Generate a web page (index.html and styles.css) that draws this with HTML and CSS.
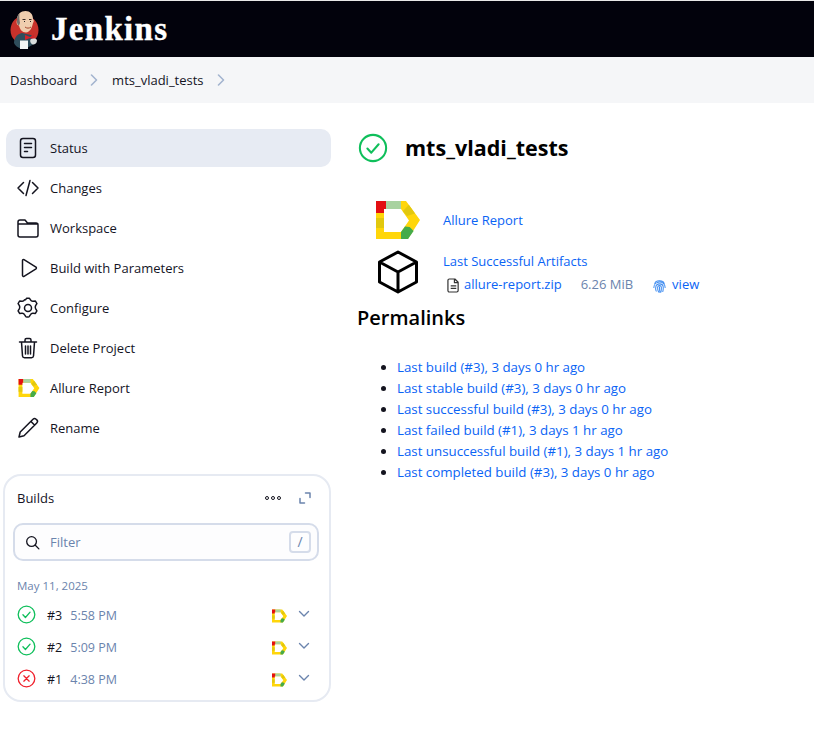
FILE: index.html
```html
<!DOCTYPE html>
<html lang="en">
<head>
<meta charset="utf-8">
<title>mts_vladi_tests - Jenkins</title>
<link rel="stylesheet" href="styles.css">
</head>
<body>
<svg class="defs" width="0" height="0" aria-hidden="true">
  <defs>
    <symbol id="allure" viewBox="0 0 44 38">
      <path fill-rule="evenodd" d="M0 0H30L44 19 32 38H0ZM8 8V31H25L33 19.500 25 8Z" fill="#ffd60a"/>
      <path d="M0 0H10V8H8V12H0Z" fill="#e30f12"/>
      <path d="M10 0H25V8H10Z" fill="#a8d2a0"/>
      <path d="M32.800 3.800 39 12.400 31 15 26.800 10.300Z" fill="#e2c80e"/>
      <path d="M0 17H8V27H0Z" fill="#e2c80e"/>
      <path d="M33.600 26 37.600 30 32 38H25V31L29 25.500Z" fill="#45ab4a"/>
    </symbol>
    <symbol id="ok" viewBox="0 0 32 32">
      <circle cx="16" cy="16" r="14" fill="none" stroke="#0fbf5b" stroke-width="2.200"/>
      <path d="M10 16.500l4.200 4.500L22 12" fill="none" stroke="#0fbf5b" stroke-width="2.200" stroke-linecap="round" stroke-linejoin="round"/>
    </symbol>
    <symbol id="chev" viewBox="0 0 12 8">
      <path d="M1.500 1.500 6 6l4.500-4.500" fill="none" stroke="#6b84ad" stroke-width="1.400" stroke-linecap="round" stroke-linejoin="round"/>
    </symbol>
  </defs>
</svg>

<header class="topbar">
  <svg class="logo" viewBox="0 0 30 40" width="30" height="40" aria-hidden="true">
    <ellipse cx="14.500" cy="20" rx="14" ry="14.500" fill="#c8322b"/>
    <path d="M4 33c0-5 3-9 8-10l9 2c3 2 4 5 3 9l-9 5c-5 0-9-2-11-6z" fill="#2f4d5c"/>
    <path d="M7 10c0-6 4-9 8.500-9S23 4 23 9c1 1 1 3 0 4-1 5-3 9-7 9.500-4 0-6-3-7-7-2 0-3-3-2-5.500z" fill="#efcdae"/>
    <path d="M7 10c0-3 1-5 2.500-6.500C9 7 9.500 10 10 13l-1 2.500c-1 0-2.500-3-2-5.500z" fill="#77706c"/>
    <path d="M12.500 9.500h3M19 9.500h2.500" stroke="#3a2b25" stroke-width="1.100"/>
    <path d="M14 11.500h1M20 11.500h1" stroke="#222" stroke-width="1.200"/>
    <path d="M15 17c2 1.500 4 1.500 6 0" stroke="#a5452c" fill="none"/>
    <path d="M15 25l5 2 4-2.500v5l-4-1.500-5 2z" fill="#d3232b"/>
    <path d="M10 30.500h8V39h-8z" fill="#f4f4f4"/>
    <path d="M21 29c2-1 6-1 6 1.500s-2 4-4 4-4-4-2-5.500z" fill="#d9dcdc"/>
  </svg>
  <span class="brand">Jenkins</span>
</header>

<nav class="crumbs">
  <a class="crumb">Dashboard</a>
  <svg class="crumb-sep" viewBox="0 0 8 12" width="8" height="12" aria-hidden="true"><path d="M1.500 1 6.500 6l-5 5" fill="none" stroke="#a3b4cf" stroke-width="1.600" stroke-linecap="round" stroke-linejoin="round"/></svg>
  <a class="crumb">mts_vladi_tests</a>
  <svg class="crumb-sep" viewBox="0 0 8 12" width="8" height="12" aria-hidden="true"><path d="M1.500 1 6.500 6l-5 5" fill="none" stroke="#a3b4cf" stroke-width="1.600" stroke-linecap="round" stroke-linejoin="round"/></svg>
</nav>

<div class="page">
  <aside class="side">
    <ul class="tasks">
      <li class="task active">
        <svg class="task-ico" viewBox="0 0 24 24"><rect x="4.500" y="2.500" width="15" height="19" rx="2.500"/><path d="M8.500 7.500h7M8.500 11.500h7M8.500 15.500h3"/></svg>
        <span>Status</span>
      </li>
      <li class="task">
        <svg class="task-ico" viewBox="0 0 24 24"><path d="M7.500 6.500 2 12l5.500 5.500M16.500 6.500 22 12l-5.500 5.500M14 4.500l-4 15"/></svg>
        <span>Changes</span>
      </li>
      <li class="task">
        <svg class="task-ico" viewBox="0 0 24 24"><path d="M2 8V6a2 2 0 0 1 2-2h5l2.500 3H20a2 2 0 0 1 2 2v10a2 2 0 0 1-2 2H4a2 2 0 0 1-2-2zM2 8h20"/></svg>
        <span>Workspace</span>
      </li>
      <li class="task">
        <svg class="task-ico" viewBox="0 0 24 24"><path d="M6.500 4.500v15a1 1 0 0 0 1.500.8l12-7.500a1 1 0 0 0 0-1.600L8 3.700a1 1 0 0 0-1.500.8z"/></svg>
        <span>Build with Parameters</span>
      </li>
      <li class="task">
        <svg class="task-ico" viewBox="0 0 24 24"><path d="M9.500 3.800 10.500 2.300h3l1 1.500c.5 1 1.500 1.500 2.600 1.400l2.300-.2 1.500 2.600-1.300 2.100c-.5 1-.5 2 0 3l1.300 2.100-1.500 2.600-2.300-.2c-1.100-.1-2.100.4-2.600 1.400l-1 1.500-.1.200c-.3.500-.7.700-1.200.7h-1.400c-.5 0-.9-.2-1.200-.7l-.1-.2-1-1.500c-.5-1-1.500-1.500-2.600-1.400l-2.300.2-1.500-2.600 1.300-2.100c.5-1 .5-2 0-3L2.100 7.600l1.500-2.600 2.300.2c1.100.1 2.100-.4 2.600-1.400z"/><circle cx="12" cy="12" r="3.500"/></svg>
        <span>Configure</span>
      </li>
      <li class="task">
        <svg class="task-ico" viewBox="0 0 24 24"><path d="M3.500 6h17M9 5.500V4a1.500 1.500 0 0 1 1.500-1.500h3A1.500 1.500 0 0 1 15 4v1.500M5.500 6l1 14a2 2 0 0 0 2 1.800h7a2 2 0 0 0 2-1.800l1-14M9.500 10v8M12 10v8M14.500 10v8"/></svg>
        <span>Delete Project</span>
      </li>
      <li class="task">
        <svg class="task-img" width="20" height="18"><use href="#allure"/></svg>
        <span>Allure Report</span>
      </li>
      <li class="task">
        <svg class="task-ico" viewBox="0 0 24 24"><path d="M3 21l1.200-5L17 3.200a2.200 2.200 0 0 1 3.100 0l.7.700a2.200 2.200 0 0 1 0 3.100L8 19.800zM15 5.500l3.500 3.500"/></svg>
        <span>Rename</span>
      </li>
    </ul>

    <section class="builds">
      <div class="builds-head">
        <span class="builds-title">Builds</span>
        <div class="builds-tools">
          <svg class="dots" viewBox="0 0 16 4" width="16" height="4" aria-hidden="true"><circle cx="2" cy="2" r="1.500"/><circle cx="8" cy="2" r="1.500"/><circle cx="14" cy="2" r="1.500"/></svg>
          <svg class="expand" viewBox="0 0 12 12" width="12" height="12" aria-hidden="true"><path d="M6.500 1H11v4.500M5.500 11H1V6.500"/></svg>
        </div>
      </div>
      <div class="filter">
        <svg class="filter-ico" viewBox="0 0 16 16" width="15" height="15" aria-hidden="true"><circle cx="7" cy="7" r="5.200"/><path d="M11 11l3.800 3.800"/></svg>
        <span class="filter-text">Filter</span>
        <kbd class="filter-key">/</kbd>
      </div>
      <div class="build-date">May 11, 2025</div>
      <div class="build">
        <svg class="build-status" width="19" height="19"><use href="#ok"/></svg>
        <span class="build-num">#3</span><span class="build-time">5:58 PM</span>
        <svg class="build-allure" width="15" height="14"><use href="#allure"/></svg>
        <svg class="build-chev" width="12" height="8"><use href="#chev"/></svg>
      </div>
      <div class="build">
        <svg class="build-status" width="19" height="19"><use href="#ok"/></svg>
        <span class="build-num">#2</span><span class="build-time">5:09 PM</span>
        <svg class="build-allure" width="15" height="14"><use href="#allure"/></svg>
        <svg class="build-chev" width="12" height="8"><use href="#chev"/></svg>
      </div>
      <div class="build">
        <svg class="build-status" viewBox="0 0 32 32" width="19" height="19"><circle cx="16" cy="16" r="14" fill="none" stroke="#f0202c" stroke-width="2.200"/><path d="M11.500 11.500l9 9M20.500 11.500l-9 9" fill="none" stroke="#f0202c" stroke-width="2.200" stroke-linecap="round"/></svg>
        <span class="build-num">#1</span><span class="build-time">4:38 PM</span>
        <svg class="build-allure" width="15" height="14"><use href="#allure"/></svg>
        <svg class="build-chev" width="12" height="8"><use href="#chev"/></svg>
      </div>
    </section>
  </aside>

  <main class="content">
    <div class="title-row">
      <svg width="30" height="30"><use href="#ok"/></svg>
      <h1 class="title">mts_vladi_tests</h1>
    </div>

    <div class="action action-allure">
      <svg class="action-ico" width="44" height="38"><use href="#allure"/></svg>
      <a class="link">Allure Report</a>
    </div>
    <div class="action action-art">
      <svg class="cube" viewBox="0 0 40 44" width="40" height="44" aria-hidden="true"><path d="M20 2 38.500 12v20L20 42 1.500 32V12zM1.500 12 20 22l18.500-10M20 22v20"/></svg>
      <div class="art-body">
        <a class="link">Last Successful Artifacts</a>
        <div class="art-row">
          <svg class="file-ico" viewBox="0 0 14 16" width="13" height="15" aria-hidden="true"><path d="M2.500 1h6L12 4.500v9a1.500 1.500 0 0 1-1.500 1.500h-8A1.500 1.500 0 0 1 1 13.500v-11A1.500 1.500 0 0 1 2.500 1zM8 1v4h4M4 8.500h6M4 11h6"/></svg>
          <a class="link">allure-report.zip</a>
          <span class="size">6.26 MiB</span>
          <svg class="print-ico" viewBox="0 0 16 16" width="15" height="15" aria-hidden="true"><path d="M3 6c1-4 9-4 10 0M2 10c0-7 12-8 12 0M4.500 14c-1-2-.5-3-.5-4 0-5 8-5 8 0 0 1 0 3-.5 4.500M7 15c-1-2-1-3-1-5 0-2.500 4-2.500 4 0 0 2 0 3-.5 5M8 9.500c0 2 0 4 .5 6"/></svg>
          <a class="link">view</a>
        </div>
      </div>
    </div>

    <h2 class="subtitle">Permalinks</h2>
    <ul class="perma">
      <li><a class="link">Last build (#3), 3 days 0 hr ago</a></li>
      <li><a class="link">Last stable build (#3), 3 days 0 hr ago</a></li>
      <li><a class="link">Last successful build (#3), 3 days 0 hr ago</a></li>
      <li><a class="link">Last failed build (#1), 3 days 1 hr ago</a></li>
      <li><a class="link">Last unsuccessful build (#1), 3 days 1 hr ago</a></li>
      <li><a class="link">Last completed build (#3), 3 days 0 hr ago</a></li>
    </ul>
  </main>
</div>
</body>
</html>
```

FILE: styles.css
```css
* { box-sizing: border-box; }
html, body { margin: 0; padding: 0; }
body {
  background: #fff;
  color: #14141f;
  font-family: "Open Sans", "Noto Sans", sans-serif;
  font-size: 13px;
  line-height: 20px;
}
.defs { position: absolute; }
.topbar {
  height: 57px;
  border-top: 1px solid #e8e8e8;
  background: #02020c;
  display: flex;
  align-items: center;
  padding-left: 10px;
}
.logo { margin-top: 2px; flex: none; }
.brand {
  margin-left: 11px;
  color: #fff;
  font-family: "Liberation Serif", serif;
  font-weight: 700;
  font-size: 33px;
  letter-spacing: 1.300px;
  -webkit-text-stroke: 0.4px #fff;
}
.crumbs {
  height: 46px;
  background: #f5f6f8;
  display: flex;
  align-items: center;
  padding-left: 10px;
}
.crumb { color: #14141f; }
.crumb-sep { margin: 0 14px 0 13px; }

.page { display: flex; }
.side { width: 328px; margin-left: 3px; padding-top: 26px; flex: none; }
.tasks { list-style: none; margin: 0; padding: 0 0 0 3px; }
.task {
  height: 38px;
  margin-bottom: 2px;
  border-radius: 10px;
  display: flex;
  align-items: center;
  padding-left: 10px;
}
.task.active { background: #e7ebf3; }
.task span { margin-left: 10px; }
.task-ico {
  width: 24px;
  height: 24px;
  flex: none;
  fill: none;
  stroke: #14141f;
  stroke-width: 1.500;
  stroke-linecap: round;
  stroke-linejoin: round;
}
.task-img { width: 24px; flex: none; padding-left: 2px; }

.builds {
  margin-top: 27px;
  width: 328px;
  height: 228px;
  border: 2px solid #e6eaf2;
  border-radius: 18px;
  padding: 0 10px 0 8px;
}
.builds-head {
  display: flex;
  justify-content: space-between;
  align-items: center;
  padding: 12px 8px 0 4px;
  height: 32px;
}
.builds-title { font-size: 13px; }
.builds-tools { display: flex; align-items: center; gap: 18px; }
.dots { fill: none; stroke: #14141f; }
.dots circle { stroke-width: 1; }
.expand { fill: none; stroke: #6b84ad; stroke-width: 1.500; stroke-linecap: round; stroke-linejoin: round; }
.filter {
  margin-top: 15px;
  height: 38px;
  border: 2px solid #d5dcea;
  border-radius: 10px;
  background: #fdfdfe;
  display: flex;
  align-items: center;
  padding: 0 6px 0 10px;
}
.filter-ico { flex: none; fill: none; stroke: #14141f; stroke-width: 1.400; stroke-linecap: round; }
.filter-text { margin-left: 10px; color: #6b84ad; flex: 1; }
.filter-key {
  width: 22px;
  height: 22px;
  border: 2px solid #d5dcea;
  border-radius: 4px;
  color: #6b84ad;
  font: 14px/18px "Open Sans", sans-serif;
  text-align: center;
}
.build-date { margin-top: 16px; color: #6b84ad; font-size: 11.500px; line-height: 18px; padding-left: 4px; }
.build {
  height: 32px;
  display: flex;
  align-items: center;
  padding-left: 4px;
}
.build-date + .build { margin-top: 4px; }
.build-status { flex: none; margin-top: -2px; }
.build-num { margin-left: 11px; margin-top: 1px; font-size: 12.500px; color: #14141f; }
.build-time { margin-left: 8px; margin-top: 1px; font-size: 12.500px; color: #6b84ad; flex: 1; }
.build-allure { flex: none; margin-top: 2px; }
.build-chev { flex: none; margin-left: 11px; margin-right: 9px; margin-top: -3px; }

.content { padding: 26px 0 0 27px; flex: 1; }
.title-row { display: flex; align-items: center; height: 38px; }
.title { margin: 0 0 0 17px; font-size: 21.500px; line-height: 38px; font-weight: 700; color: #000; }
.action { display: flex; }
.action-allure { margin-top: 33px; align-items: center; padding-left: 18px; height: 40px; }
.action-ico { flex: none; }
.action-allure .link { margin-left: 23px; }
.action-art { margin-top: 10px; padding-left: 20px; }
.cube { flex: none; fill: none; stroke: #000; stroke-width: 3; stroke-linejoin: round; }
.art-body { margin-left: 25px; margin-top: 1px; }
.art-row { display: flex; align-items: center; margin-top: 3px; padding-left: 4px; }
.file-ico { flex: none; margin-top: 3px; fill: none; stroke: #333; stroke-width: 1.300; stroke-linejoin: round; }
.art-row .link { margin-left: 4px; }
.size { margin-left: 19px; color: #6b84ad; }
.print-ico { flex: none; margin-left: 19px; margin-top: 2px; fill: none; stroke: #3d8bf0; stroke-width: 1.100; stroke-linecap: round; }
.link { color: #0a64f5; cursor: pointer; }
.art-row .print-ico + .link { margin-left: 5px; }
.subtitle { margin: 9px 0 0 -1px; font-size: 20px; line-height: 30px; font-weight: 600; color: #000; }
.perma { margin: 24px 0 0; padding-left: 39px; font-size: 13.300px; }
.perma li { height: 21px; line-height: 21px; }
```
